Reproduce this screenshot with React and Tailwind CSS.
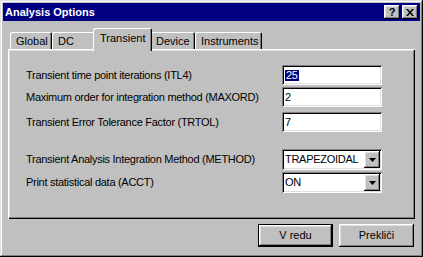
import React from 'react';

const raised = "shadow-[inset_-1px_-1px_#000,inset_1px_1px_#fff,inset_-2px_-2px_#808080,inset_2px_2px_#dfdfdf]";
const sunken = "shadow-[inset_1px_1px_#808080,inset_-1px_-1px_#fff,inset_2px_2px_#000,inset_-2px_-2px_#dfdfdf]";

const tabs = [
  { name: 'Global', w: 'w-[42px]' },
  { name: 'DC', w: 'w-[43px]' },
  { name: 'Transient', w: 'w-[59px]', active: true },
  { name: 'Device', w: 'w-[45px]' },
  { name: 'Instruments', w: 'w-[67px]' },
];

const DownArrow = () => (
  <div className={`w-[16px] h-[17px] bg-[#c0c0c0] flex items-center justify-center ${raised}`}>
    <svg width="7" height="4" viewBox="0 0 7 4">
      <path d="M0 0h7L3.5 4z" fill="#000" />
    </svg>
  </div>
);

const TextField = ({ children }) => (
  <div className={`w-[100px] h-[20px] bg-white flex items-center pl-[3px] text-black ${sunken}`}>
    {children}
  </div>
);

const Select = ({ value }) => (
  <div className={`w-[100px] h-[21px] bg-white flex items-center justify-between pl-[3px] pr-[2px] ${sunken}`}>
    <span>{value}</span>
    <DownArrow />
  </div>
);

const Row = ({ label, mt, children }) => (
  <div className={`flex items-center justify-between pl-[18px] pr-[33px] ${mt}`}>
    <span>{label}</span>
    {children}
  </div>
);

export default function App() {
  return (
    <div className={`w-[423px] h-[257px] bg-[#c0c0c0] p-[3px] font-['Liberation_Sans',Arial,sans-serif] text-[11px] text-black leading-none shadow-[inset_-1px_-1px_#000,inset_1px_1px_#dfdfdf,inset_-2px_-2px_#808080,inset_2px_2px_#fff]`}>
      {/* title bar */}
      <div className="h-[18px] bg-[#000080] flex items-center justify-between pl-[2px] pr-[2px]">
        <span className="text-white font-bold text-[11px]">Analysis Options</span>
        <div className="flex gap-[2px]">
          <div className={`w-[16px] h-[14px] bg-[#c0c0c0] flex items-center justify-center font-bold text-[11px] ${raised}`}>?</div>
          <div className={`w-[16px] h-[14px] bg-[#c0c0c0] flex items-center justify-center ${raised}`}>
            <svg width="8" height="7" viewBox="0 0 8 7">
              <path d="M0 0h2l2 2.5L6 0h2L5 3.5 8 7H6L4 4.5 2 7H0l3-3.5z" fill="#000" />
            </svg>
          </div>
        </div>
      </div>

      <div className="px-[5px] pt-[7px]">
        {/* tabs */}
        <div className="flex items-end pl-[2px] h-[21px]">
          {tabs.map((t) =>
            t.active ? (
              <div
                key={t.name}
                className={`${t.w} h-[23px] -mx-[2px] -mb-[2px] relative z-10 bg-[#c0c0c0] rounded-t-[2px] pl-[7px] pt-[5px] shadow-[inset_1px_1px_#fff,inset_-1px_0_#000,inset_-2px_0_#808080]`}
              >
                {t.name}
              </div>
            ) : (
              <div
                key={t.name}
                className={`${t.w} h-[17px] bg-[#c0c0c0] rounded-t-[2px] pl-[6px] pt-[4px] shadow-[inset_1px_1px_#fff,inset_-1px_0_#000,inset_-2px_0_#808080]`}
              >
                {t.name}
              </div>
            )
          )}
        </div>

        {/* panel */}
        <div className="h-[170px] pt-[16px] tracking-[-0.28px] shadow-[inset_1px_1px_#fff,inset_-1px_-1px_#000,inset_-2px_-2px_#808080,inset_2px_2px_#dfdfdf]">
          <Row label="Transient time point iterations (ITL4)">
            <TextField>
              <span className="bg-[#000080] text-white px-px">25</span>
            </TextField>
          </Row>
          <Row label="Maximum order for integration method (MAXORD)" mt="mt-[2px]">
            <TextField>2</TextField>
          </Row>
          <Row label="Transient Error Tolerance Factor (TRTOL)" mt="mt-[5px]">
            <TextField>7</TextField>
          </Row>
          <Row label="Transient Analysis Integration Method (METHOD)" mt="mt-[17px]">
            <Select value="TRAPEZOIDAL" />
          </Row>
          <Row label="Print statistical data (ACCT)" mt="mt-[2px]">
            <Select value="ON" />
          </Row>
        </div>

        {/* buttons */}
        <div className="flex justify-end gap-[6px] mt-[5px] pr-[1px]">
          <div className="w-[75px] h-[23px] border border-black">
            <div className={`w-full h-full flex items-center justify-center ${raised}`}>V redu</div>
          </div>
          <div className={`w-[75px] h-[23px] flex items-center justify-center ${raised}`}>Prekliči</div>
        </div>
      </div>
    </div>
  );
}
